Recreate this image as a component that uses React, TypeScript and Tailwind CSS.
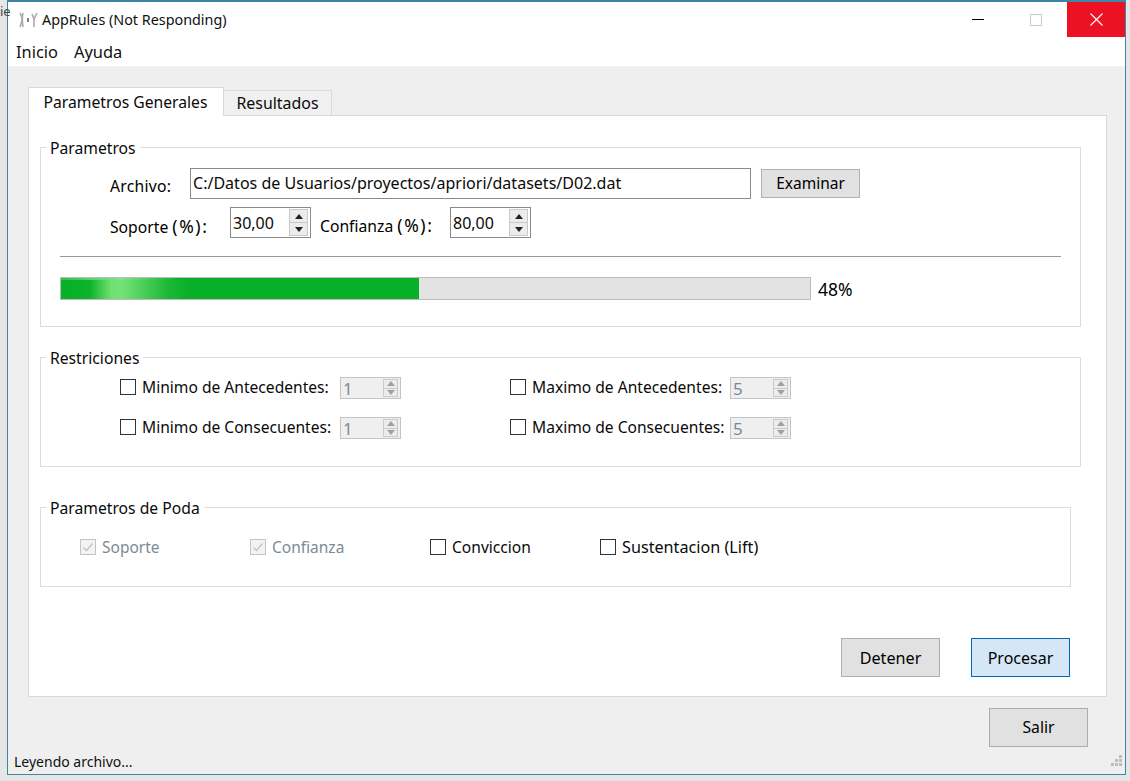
import React from 'react'

function Legend({ children }: { children: React.ReactNode }) {
  return (
    <span className="absolute left-[5px] top-[-10px] bg-white px-[4px] text-[15.7px] leading-[20px] text-[#0a0a0a]">
      {children}
    </span>
  )
}

function Arrow({ up, color }: { up: boolean; color: string }) {
  return (
    <svg width="8" height="5" viewBox="0 0 8 5">
      <polygon points={up ? '4,0 8,5 0,5' : '0,0 8,0 4,5'} fill={color} />
    </svg>
  )
}

function Spin({ value, disabled }: { value: string; disabled?: boolean }) {
  return (
    <div
      className={
        disabled
          ? 'flex h-[22px] w-[61px] items-center justify-between border border-[#c4c4c4] bg-[#efefef] px-[2px] text-[17px] leading-[20px] text-[#7d8a96]'
          : 'flex h-[31px] w-[81px] items-center justify-between border border-[#8a8a8a] bg-white px-[2px] text-[16px] text-[#0a0a0a]'
      }
    >
      <span className={disabled ? 'mt-[2px]' : ''}>{value}</span>
      <div className={disabled ? 'flex h-[18px] w-[15px] flex-col' : 'flex h-[27px] w-[19px] flex-col'}>
        <div className="flex flex-1 items-center justify-center border border-[#c9c9c9] bg-[#ececec]">
          <Arrow up color={disabled ? '#a0a0a0' : '#222222'} />
        </div>
        <div className="flex flex-1 items-center justify-center border border-t-0 border-[#c9c9c9] bg-[#ececec]">
          <Arrow up={false} color={disabled ? '#a0a0a0' : '#222222'} />
        </div>
      </div>
    </div>
  )
}

function Check({ label, checked, disabled, wide }: { label: string; checked?: boolean; disabled?: boolean; wide?: boolean }) {
  return (
    <div className="flex items-center leading-[20px]">
      <div
        className={
          disabled
            ? 'flex size-[16px] items-center justify-center border border-[#c4c4c4] bg-[#f3f3f3]'
            : 'size-[16px] border border-[#333333] bg-white'
        }
      >
        {checked && (
          <svg width="12" height="12" viewBox="0 0 12 12" fill="none">
            <path d="M1.5 6.5 L4.5 9.5 L10.5 2.5" stroke="#c2c2c2" strokeWidth="1.2" />
          </svg>
        )}
      </div>
      <span
        className={
          disabled
            ? 'ml-[6px] text-[15.5px] text-[#7d8a96]'
            : wide
              ? 'ml-[6px] text-[16.2px] text-[#0a0a0a]'
              : 'ml-[6px] text-[15.6px] text-[#0a0a0a]'
        }
      >
        {label}
      </span>
    </div>
  )
}

function LimitRow({ label, value }: { label: string; value: string }) {
  return (
    <div className="flex w-[281px] items-center justify-between">
      <div className="mb-[2px]">
        <Check label={label} />
      </div>
      <Spin value={value} disabled />
    </div>
  )
}

export default function App() {
  return (
    <div
      className="relative h-[781px] w-[1130px] overflow-hidden bg-[#e6e6e6] text-[15.7px]"
      style={{ fontFamily: '"Noto Sans", "Open Sans", sans-serif' }}
    >
      <span className="absolute left-0 top-[2px] text-[13px] text-[#444444]">ie</span>

      <div className="ml-[7px] flex h-[775px] w-[1119px] flex-col border border-t-2 border-[#3f86a6] bg-[#efefef]">
        {/* Title bar */}
        <div className="flex h-[35px] shrink-0 items-center bg-white">
          <svg className="ml-[10px]" width="20" height="18" viewBox="0 0 20 18" fill="none" stroke="#aaaaaa" strokeWidth="1.6">
            <path d="M2 2 C4 6 4 6 4 8 C4 11 3 13 2 16 M5 2 C4 6 4 10 5 16" />
            <path d="M9 7 L11 7 L11 11 L9 11 Z" fill="#808080" stroke="none" />
            <path d="M14 3 L16 8 L19 2 M16 8 L16 16" />
          </svg>
          <span className="ml-[4px] text-[14.35px] text-[#111111]">AppRules (Not Responding)</span>
          <div className="ml-auto flex items-center self-stretch">
            <div className="h-px w-[12px] bg-black" />
            <div className="ml-[46px] size-[12px] border border-[#cccccc]" />
            <div className="ml-[25px] flex w-[58px] items-center justify-center self-stretch bg-[#ec1224]">
              <svg width="13" height="13" viewBox="0 0 13 13" stroke="white" strokeWidth="1.1">
                <path d="M0.5 0.5 L12.5 12.5 M12.5 0.5 L0.5 12.5" />
              </svg>
            </div>
          </div>
        </div>

        {/* Menu */}
        <div className="flex h-[29px] shrink-0 items-center gap-[16px] bg-white pl-[8px] pt-[1px] text-[16.4px] text-[#111111]">
          <span>Inicio</span>
          <span>Ayuda</span>
        </div>

        <div className="flex flex-1 flex-col pl-[20px] pr-[17px] pt-[21px]">
          {/* Tabs */}
          <div className="relative z-10 flex h-[29px] items-end">
            <div className="flex h-[29px] w-[196px] items-center justify-center border border-b-0 border-[#d9d9d9] bg-white pr-[1px] pt-[1px] text-[15.7px] text-[#0a0a0a]">
              Parametros Generales
            </div>
            <div className="flex h-[26px] w-[108px] items-center justify-center border border-l-0 border-[#d9d9d9] bg-[#f0f0f0] pt-[2px] text-[15.9px] text-[#0a0a0a]">
              Resultados
            </div>
          </div>

          <div className="mt-[-1px] flex h-[582px] w-[1079px] flex-col border border-[#d9d9d9] bg-white pl-[11px] pt-[31px]">
            {/* Parametros */}
            <div className="relative h-[180px] w-[1041px] border border-[#dcdcdc] pl-[19px]">
              <Legend>Parametros</Legend>
              <div className="flex h-[51px] items-center pt-[20px]">
                <span className="ml-[50px] mt-[4px] w-[80px] leading-[20px] tracking-[0.25px]">Archivo:</span>
                <div className="flex h-[31px] w-[561px] items-center border border-[#8a8a8a] pl-[2px] text-[16.05px] text-[#0a0a0a]">
                  C:/Datos de Usuarios/proyectos/apriori/datasets/D02.dat
                </div>
                <div className="ml-[10px] flex h-[29px] w-[99px] items-center justify-center border border-[#b0b0b0] bg-[#e1e1e1] pt-[1px] text-[15.5px]">
                  Examinar
                </div>
              </div>
              <div className="mt-[8px] flex h-[31px] items-center">
                <span className="ml-[50px] mt-[8px] w-[120px] leading-[20px]">
                  Soporte <span className="text-[17.5px] tracking-[1.6px]">(%):</span>
                </span>
                <Spin value="30,00" />
                <span className="ml-[9px] mt-[6px] w-[130px] leading-[20px]">
                  Confianza <span className="text-[17.5px] tracking-[1.6px]">(%):</span>
                </span>
                <Spin value="80,00" />
              </div>
              <div className="mt-[18px] h-px w-[1001px] bg-[#9a9a9a]" />
              <div className="mt-[20px] flex h-[23px] items-center">
                <div className="h-[23px] w-[751px] border border-[#bcbcbc] bg-[#e3e3e3]">
                  <div className="h-full w-[358px] bg-[linear-gradient(90deg,#07b027_0%,#0cb32c_8%,#70e070_14%,#74e276_17%,#1cb838_30%,#07b027_36%)]">
                    <div className="h-[2px] w-[120px] bg-[linear-gradient(90deg,#2fc24a_0%,#7fe585_50%,#07b027_100%)]" />
                  </div>
                </div>
                <span className="ml-[7px] text-[17.5px] leading-[20px]">48%</span>
              </div>
            </div>

            {/* Restriciones */}
            <div className="relative mt-[30px] h-[110px] w-[1041px] border border-[#dcdcdc] pl-[79px] pt-[19px]">
              <Legend>Restriciones</Legend>
              <div className="flex flex-col gap-[18px]">
                <div className="flex gap-[109px]">
                  <LimitRow label="Minimo de Antecedentes:" value="1" />
                  <LimitRow label="Maximo de Antecedentes:" value="5" />
                </div>
                <div className="flex gap-[109px]">
                  <LimitRow label="Minimo de Consecuentes:" value="1" />
                  <LimitRow label="Maximo de Consecuentes:" value="5" />
                </div>
              </div>
            </div>

            {/* Poda */}
            <div className="relative mt-[40px] h-[80px] w-[1031px] border border-[#dcdcdc] pl-[39px] pt-[29px]">
              <Legend>Parametros de Poda</Legend>
              <div className="flex">
                <div className="w-[170px]"><Check label="Soporte" checked disabled /></div>
                <div className="w-[180px]"><Check label="Confianza" checked disabled /></div>
                <div className="w-[170px]"><Check label="Conviccion" /></div>
                <Check label="Sustentacion (Lift)" wide />
              </div>
            </div>

            <div className="mt-[51px] flex justify-end gap-[31px] pr-[36px]">
              <div className="flex h-[39px] w-[99px] items-center justify-center border border-[#adadad] bg-[#e1e1e1] pt-[1px] text-[16.2px]">
                Detener
              </div>
              <div className="flex h-[39px] w-[99px] items-center justify-center border border-[#0068b8] bg-[#d5e7f7] pt-[1px] text-[16px]">
                Procesar
              </div>
            </div>
          </div>

          <div className="mt-[11px] flex justify-end pr-[20px]">
            <div className="flex h-[39px] w-[99px] items-center justify-center border border-[#adadad] bg-[#e1e1e1] pt-[1px]">
              Salir
            </div>
          </div>
        </div>

        {/* Status bar */}
        <div className="flex h-[27px] shrink-0 items-center justify-between pl-[6px] pr-[2px] pt-[1px] text-[14px] text-[#111111]">
          <span>Leyendo archivo...</span>
          <svg width="12" height="12" viewBox="0 0 12 12" fill="#bdbdbd">
            <rect x="8" y="0" width="3" height="3" />
            <rect x="4" y="4" width="3" height="3" />
            <rect x="8" y="4" width="3" height="3" />
            <rect x="0" y="8" width="3" height="3" />
            <rect x="4" y="8" width="3" height="3" />
            <rect x="8" y="8" width="3" height="3" />
          </svg>
        </div>
      </div>
    </div>
  )
}
